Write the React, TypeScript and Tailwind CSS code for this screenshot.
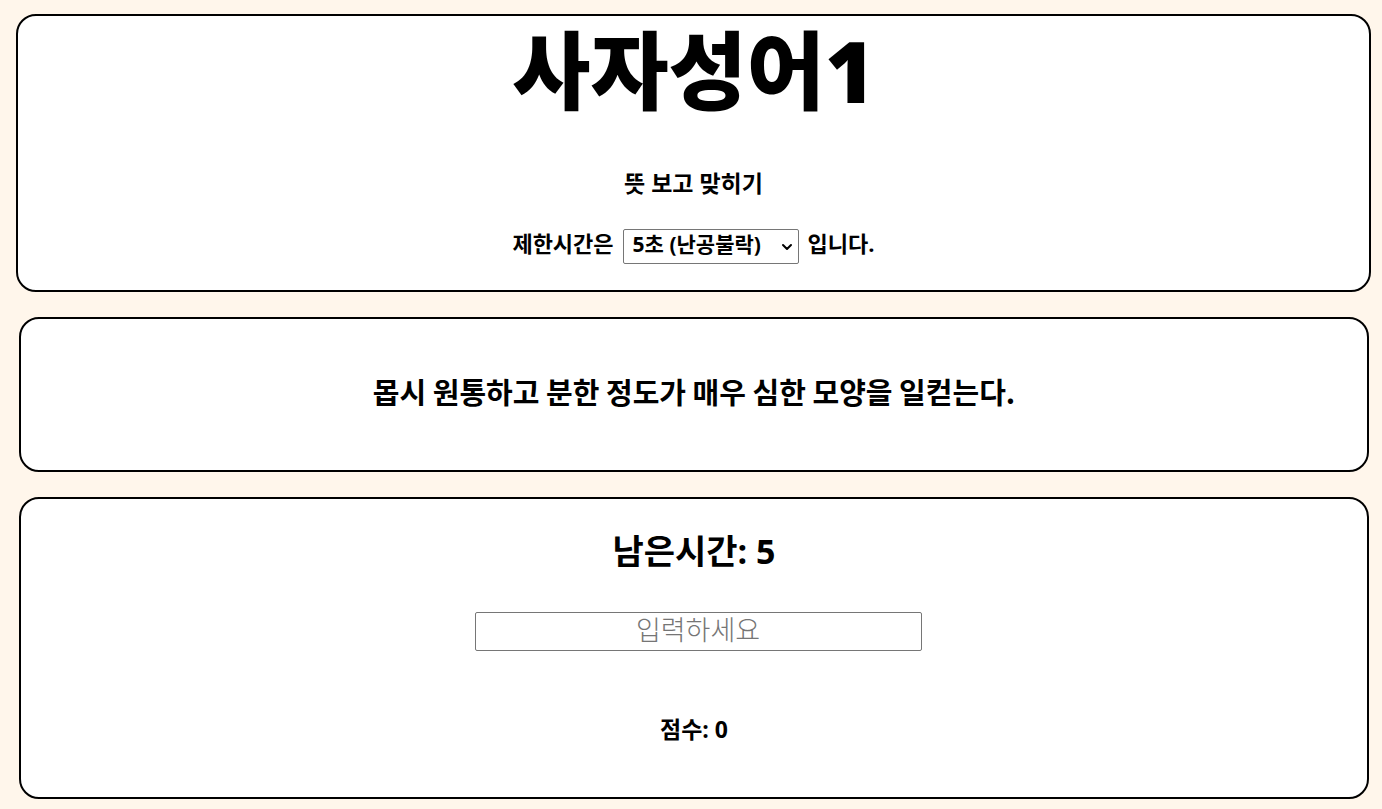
import { useState } from 'react';
import type { ReactNode } from 'react';
import { ChevronDown } from 'lucide-react';

const limits = [
  { value: 5, label: '5초 (난공불락)' },
  { value: 10, label: '10초 (어려움)' },
  { value: 20, label: '20초 (보통)' },
  { value: 30, label: '30초 (쉬움)' },
];

function Panel({ className, children }: { className: string; children: ReactNode }) {
  return (
    <section className={`flex flex-col items-center rounded-[20px] border-2 border-black bg-white text-center ${className}`}>
      {children}
    </section>
  );
}

export default function App() {
  const [limit, setLimit] = useState(5);
  const [answer, setAnswer] = useState('');

  return (
    <main className="min-h-screen bg-[#fff6eb] pt-[14px] pr-[11px] pb-[10px] pl-4 font-['Open_Sans','Noto_Sans_CJK_KR',sans-serif] text-black">
      <Panel className="pb-[26px]">
        <h1 className="text-[85px] leading-[108px] font-black">사자성어1</h1>
        <p className="mt-[43px] text-[23px] leading-8 font-bold">뜻 보고 맞히기</p>
        <div className="mt-[30px] flex items-start gap-[9px] text-[22px] leading-7 font-bold">
          <label htmlFor="limit">제한시간은</label>
          <div className="relative">
            <select
              id="limit"
              value={limit}
              onChange={(e) => setLimit(Number(e.target.value))}
              className="block h-[35px] w-44 appearance-none rounded-xs border border-[#767676] bg-white pb-[6px] pl-[9px] text-[21px] leading-7"
            >
              {limits.map((item) => (
                <option key={item.value} value={item.value}>
                  {item.label}
                </option>
              ))}
            </select>
            <ChevronDown className="pointer-events-none absolute top-[10px] right-1 size-4" strokeWidth={3} />
          </div>
          <span>입니다.</span>
        </div>
      </Panel>

      <Panel className="mt-[25px] mr-[2px] ml-[3px] pt-12 pb-[54px]">
        <h2 className="font-['Noto_Sans_CJK_KR',sans-serif] text-[29px] leading-[49px] font-bold">
          몹시 원통하고 분한 정도가 매우 심한 모양을 일컫는다.
        </h2>
      </Panel>

      <Panel className="mt-[25px] mr-[2px] ml-[3px] pt-7 pb-[52px]">
        <p className="text-[34px] leading-[48px] font-bold">남은시간: {limit}</p>
        <input
          type="text"
          aria-label="정답"
          placeholder="입력하세요"
          value={answer}
          onChange={(e) => setAnswer(e.target.value)}
          className="mt-[37px] ml-2 h-[39px] w-[447px] rounded-xs border border-[#767676] pb-[2px] text-center text-[27px] font-light placeholder:text-[#757575]"
        />
        <p className="mt-[62px] text-[23px] leading-8 font-bold">점수: 0</p>
      </Panel>
    </main>
  );
}
